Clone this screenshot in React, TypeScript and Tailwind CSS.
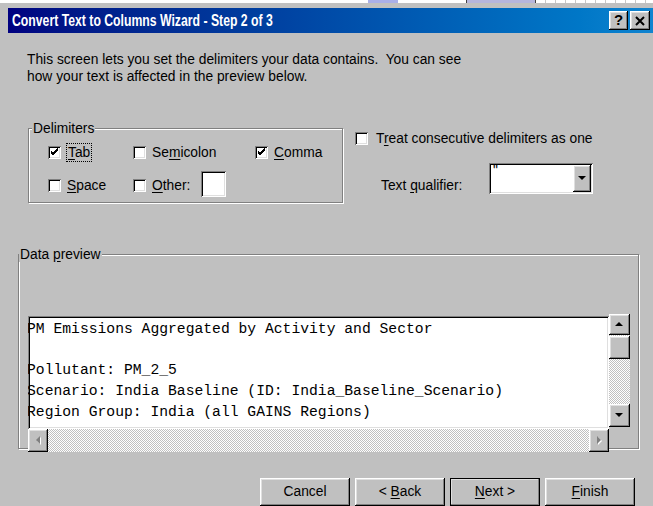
import type { ReactNode } from "react";

const raised =
	"bg-[#c0c0c0] shadow-[inset_-1px_-1px_0_#000,inset_1px_1px_0_#fff,inset_-2px_-2px_0_#808080,inset_2px_2px_0_#dfdfdf]";
const sunken =
	"shadow-[inset_1px_1px_0_#808080,inset_-1px_-1px_0_#fff,inset_2px_2px_0_#000,inset_-2px_-2px_0_#dfdfdf]";
const dither =
	"bg-[image:repeating-conic-gradient(#c0c0c0_0%_25%,#ffffff_0%_50%)] bg-[length:2px_2px]";

function Key({ children }: { children: ReactNode }) {
	return <span className="underline underline-offset-2">{children}</span>;
}

function Checkbox({ checked }: { checked?: boolean }) {
	return (
		<span className={`flex h-[13px] w-[13px] shrink-0 items-center justify-center bg-white ${sunken}`}>
			{checked && (
				<svg width="9" height="9" viewBox="0 0 9 9">
					<path d="M1 4 L3 6 L8 1 M1 5 L3 7 L8 2 M1 3 L3 5 L8 0" stroke="#000" strokeWidth="1" fill="none" />
				</svg>
			)}
		</span>
	);
}

function Option({ checked, focus, children }: { checked?: boolean; focus?: boolean; children: ReactNode }) {
	return (
		<div className="flex items-center gap-[6px]">
			<Checkbox checked={checked} />
			<span
				className={
					focus ? "px-[1px] py-[1px] outline-1 outline-dotted outline-black leading-[15px]" : "leading-[15px]"
				}
			>
				{children}
			</span>
		</div>
	);
}

function Arrow({ dir, muted }: { dir: "up" | "down" | "left" | "right"; muted?: boolean }) {
	const pts = {
		up: "0,4 4,0 8,4",
		down: "0,0 8,0 4,4",
		left: "4,0 4,8 0,4",
		right: "0,0 0,8 4,4",
	}[dir];
	const w = dir === "up" || dir === "down" ? 8 : 4;
	const h = dir === "up" || dir === "down" ? 4 : 8;
	return (
		<svg width={w + 1} height={h + 1} viewBox={`0 0 ${w + 1} ${h + 1}`}>
			{muted && <polygon points={pts} fill="#fff" transform="translate(1,1)" />}
			<polygon points={pts} fill={muted ? "#808080" : "#000"} />
		</svg>
	);
}

function GroupBox({
	label,
	labelAt,
	className,
	children,
}: {
	label: ReactNode;
	labelAt: string;
	className: string;
	children: ReactNode;
}) {
	return (
		<div className={`relative border border-[#808080] shadow-[inset_1px_1px_0_#fff,1px_1px_0_#fff] ${className}`}>
			<span className={`absolute -top-[8px] bg-[#c0c0c0] px-[1px] leading-[15px] ${labelAt}`}>{label}</span>
			{children}
		</div>
	);
}

function TopStrip() {
	return (
		<div className="flex h-[3px] bg-white">
			<div className="w-[368px]" />
			<div className="w-[30px] bg-[#aab0e8]" />
			<div className="w-[68px]" />
			<div className="w-[70px] border-x border-[#404040] bg-[#b6b6dc]" />
			<div className="flex-1 bg-[image:repeating-linear-gradient(90deg,transparent_0_9px,#c8c8c8_9px_10px)]" />
		</div>
	);
}

function TitleBar() {
	return (
		<div className="ml-[8px] mt-[5px] flex h-[25px] items-center bg-linear-to-r from-[#000080] to-[#1084d0] pl-[4px] pr-[3px]">
			<span className="flex-1 origin-left scale-x-[0.72] whitespace-nowrap font-['Liberation_Sans',sans-serif] text-[17px] font-bold text-white">
				Convert Text to Columns Wizard - Step 2 of 3
			</span>
			<div className="flex gap-[2px]">
				<span className={`flex h-[19px] w-[19px] items-center justify-center text-[15px] font-bold ${raised}`}>?</span>
				<span className={`flex h-[19px] w-[20px] items-center justify-center ${raised}`}>
					<svg width="10" height="10" viewBox="0 0 10 10">
						<path d="M1 1 L9 9 M9 1 L1 9" stroke="#000" strokeWidth="2" />
					</svg>
				</span>
			</div>
		</div>
	);
}

const previewLines = [
	"PM Emissions Aggregated by Activity and Sector",
	"",
	"Pollutant: PM_2_5",
	"Scenario: India Baseline (ID: India_Baseline_Scenario)",
	"Region Group: India (all GAINS Regions)",
];

function DataPreview() {
	return (
		<div className="flex items-start pl-[9px] pt-[59px]">
			<div className="flex w-[581px] flex-col">
				<div className={`mt-[2px] h-[113px] overflow-hidden bg-white pt-[3px] ${sunken}`}>
					<div className="-ml-[1px] whitespace-pre font-['Liberation_Mono',monospace] text-[14.7px] leading-[20.7px]">
						{previewLines.map((line, i) => (
							<div key={i}>{line || " "}</div>
						))}
					</div>
				</div>
				<div className={`flex h-[23px] ${dither}`}>
					<span className={`flex h-[23px] w-[20px] items-center justify-center ${raised}`}>
						<Arrow dir="left" muted />
					</span>
					<div className="flex-1" />
					<span className={`flex h-[23px] w-[20px] items-center justify-center ${raised}`}>
						<Arrow dir="right" muted />
					</span>
				</div>
			</div>
			<div className={`flex h-[113px] w-[21px] flex-col ${dither}`}>
				<span className={`flex h-[21px] items-center justify-center ${raised}`}>
					<Arrow dir="up" />
				</span>
				<span className={`mt-px h-[23px] ${raised}`} />
				<div className="flex-1" />
				<span className={`flex h-[23px] items-center justify-center ${raised}`}>
					<Arrow dir="down" />
				</span>
			</div>
		</div>
	);
}

function WizardButton({ children, primary }: { children: ReactNode; primary?: boolean }) {
	return (
		<button
			className={`flex h-[28px] w-[90px] items-center justify-center ${raised} ${
				primary ? "outline-1 outline-black -outline-offset-1" : ""
			}`}
		>
			<span>{children}</span>
		</button>
	);
}

export default function App() {
	return (
		<div className="h-[506px] w-[653px] overflow-hidden bg-[#c0c0c0] font-['Liberation_Sans',sans-serif] text-[13.8px] text-black">
			<TopStrip />
			<TitleBar />

			<div className="pl-[27px] pt-[18px] leading-[17px]">
				<p>This screen lets you set the delimiters your data contains.&nbsp; You can see</p>
				<p>how your text is affected in the preview below.</p>
			</div>

			<div className="mt-[43px] flex pl-[28px]">
				<GroupBox label="Delimiters" labelAt="left-[3px]" className="h-[75px] w-[315px]">
					<div className="grid grid-cols-[85px_122px_1fr] gap-y-[10px] pl-[19px] pt-[15px]">
						<Option checked focus>
							<Key>T</Key>ab
						</Option>
						<Option>
							Se<Key>m</Key>icolon
						</Option>
						<Option checked>
							<Key>C</Key>omma
						</Option>
						<div className="flex h-[26px] items-center pt-[2px]">
							<Option>
								<Key>S</Key>pace
							</Option>
						</div>
						<div className="flex h-[26px] items-center gap-[11px]">
							<div className="pt-[2px]">
								<Option>
									<Key>O</Key>ther:
								</Option>
							</div>
							<span className={`h-[26px] w-[25px] bg-white ${sunken}`} />
						</div>
					</div>
				</GroupBox>

				<div className="flex flex-col pl-[12px]">
					<div className="mt-[2px] flex items-center gap-[8px] leading-[17px]">
						<Checkbox />
						<span>
							T<Key>r</Key>eat consecutive delimiters as one
						</span>
					</div>
					<div className="mt-[16px] flex items-end pl-[26px]">
						<span className="w-[108px] leading-[17px]">
							Text <Key>q</Key>ualifier:
						</span>
						<div className={`relative flex h-[31px] w-[104px] bg-white ${sunken}`}>
							<span className="flex-1 pl-[4px] pt-[1px] leading-[14px]">"</span>
							<span className={`m-[2px] flex w-[18px] items-center justify-center ${raised}`}>
								<Arrow dir="down" />
							</span>
						</div>
					</div>
				</div>
			</div>

			<div className="mt-[51px] pl-[18px]">
				<GroupBox
					label={
						<>
							Data <Key>p</Key>review
						</>
					}
					labelAt="left-0"
					className="h-[195px] w-[621px]"
				>
					<DataPreview />
				</GroupBox>
			</div>

			<div className="mt-[29px] flex justify-end gap-[5px] pr-[18px]">
				<WizardButton>Cancel</WizardButton>
				<WizardButton>
					&lt; <Key>B</Key>ack
				</WizardButton>
				<WizardButton primary>
					<Key>N</Key>ext &gt;
				</WizardButton>
				<WizardButton>
					<Key>F</Key>inish
				</WizardButton>
			</div>
		</div>
	);
}
